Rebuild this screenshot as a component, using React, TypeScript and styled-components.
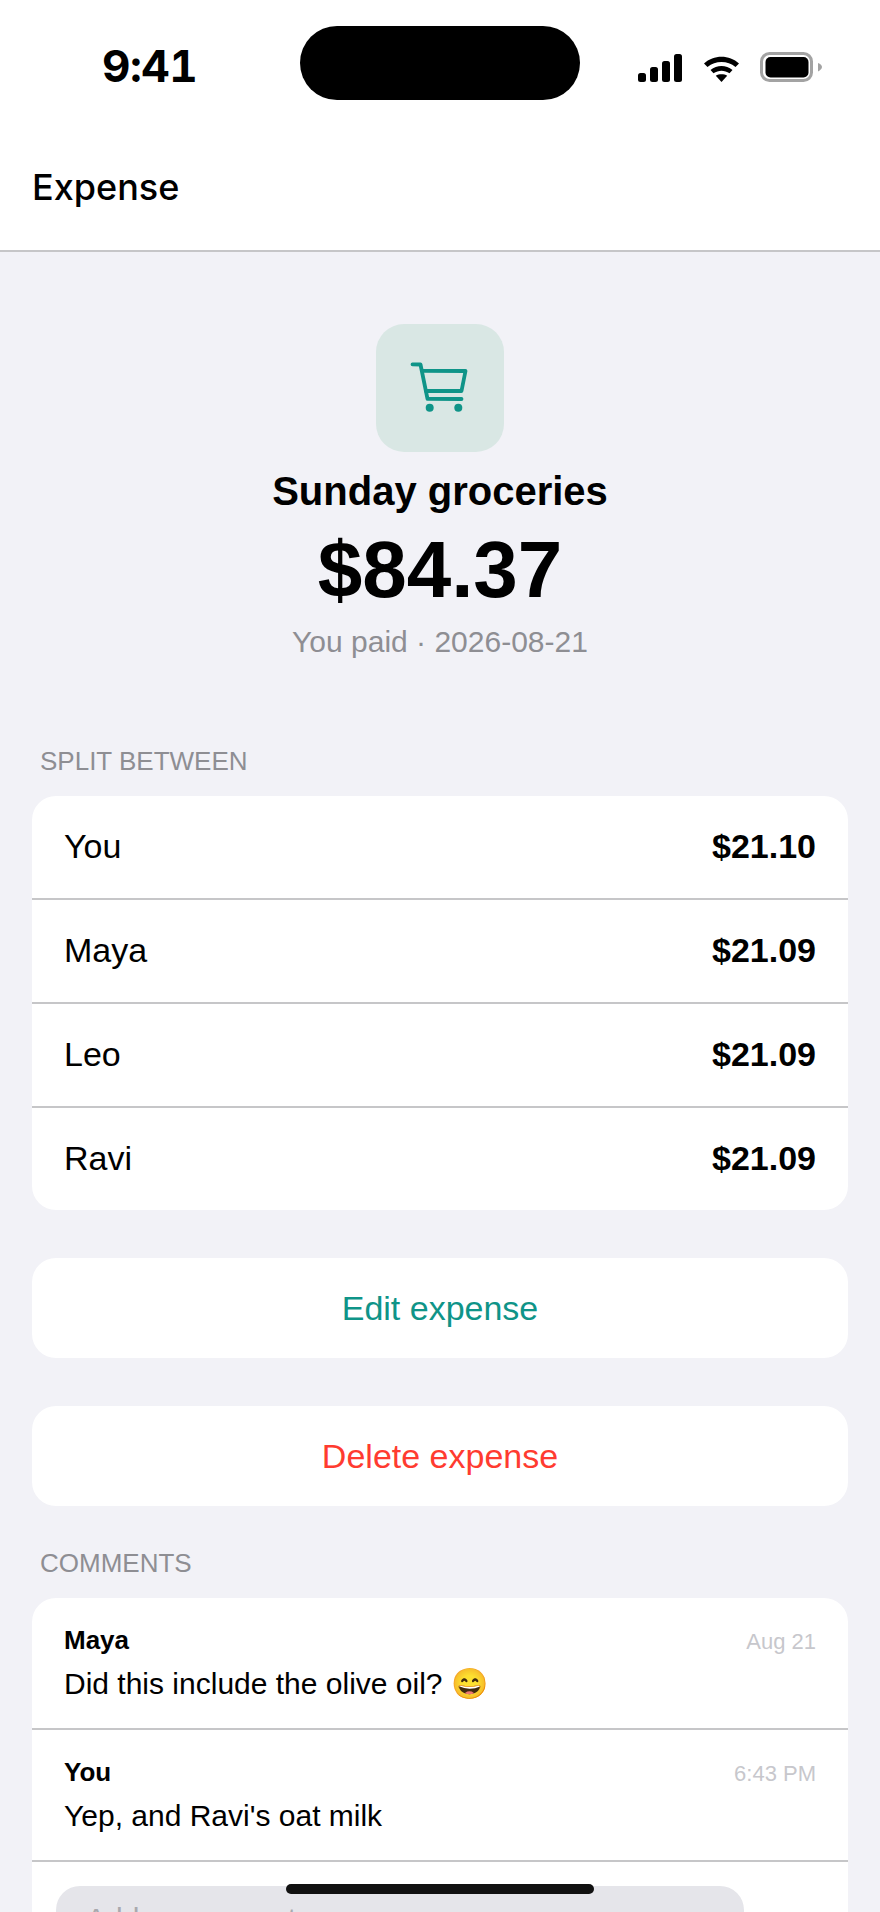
import React from "react";
import styled, { createGlobalStyle } from "styled-components";

const Global = createGlobalStyle`
  html, body { margin: 0; padding: 0; background: #f2f2f7; }
  * { box-sizing: border-box; }
`;
const Screen = styled.div`
  position: relative; width: 880px; height: 1912px; overflow: hidden;
  background: #f2f2f7; color: #000;
  font-family: "Liberation Sans", Arial, "Noto Color Emoji", sans-serif;
`;
const TopBar = styled.header`background: #fff; border-bottom: 2px solid #c6c6c8; height: 252px; display: flex; flex-direction: column;`;
const StatusBar = styled.div`height: 124px; position: relative; display: flex; align-items: flex-start; justify-content: space-between; padding: 39px 58px 0 102px;`;
const Time = styled.div`font-size: 44px; line-height: 54px; font-weight: 700; font-family: "Inter", sans-serif; font-variant-numeric: tabular-nums; letter-spacing: -0.5px; width: 100px;`;
const Island = styled.div`position: absolute; left: 300px; top: 26px; width: 280px; height: 74px; border-radius: 37px; background: #000;`;
const StatusIcons = styled.div`display: flex; align-items: flex-end; height: 30px; margin-top: 13px; svg { display: block; }`;
const WifiSlot = styled.span`margin: 0 21px 0 22px;`;
const NavBar = styled.div`height: 126px; display: flex; align-items: center; padding: 0 32px;`;
const NavTitle = styled.h1`margin: 0; font: 500 36px/44px "Inter", sans-serif;`;
const Hero = styled.section`display: flex; flex-direction: column; align-items: center; padding-top: 72px;`;
const IconTile = styled.div`width: 128px; height: 128px; border-radius: 28px; background: #d9e7e4; svg { display: block; }`;
const Title = styled.div`font-size: 40px; line-height: 48px; font-weight: 700; margin-top: 15px;`;
const Amount = styled.div`font-size: 80px; line-height: 92px; font-weight: 700; margin-top: 9px;`;
const Sub = styled.div`font-size: 30px; line-height: 38px; color: #8e8e93; margin-top: 7px;`;
const SectionLabel = styled.div<{ $top: number }>`font-size: 26px; line-height: 32px; color: #8e8e93; padding-left: 40px; margin: ${p => p.$top}px 0 19px;`;
const Card = styled.div`margin: 0 32px; background: #fff; border-radius: 24px; overflow: hidden;`;
const Row = styled.div`height: 104px; padding: 0 32px 2px; display: flex; align-items: center; justify-content: space-between; font-size: 34px; border-bottom: 2px solid #c6c6c8; &:last-child { height: 102px; border-bottom: 0; }`;
const Value = styled.span`font-weight: 700;`;
const ActionCard = styled.div<{ $color: string }>`margin: 48px 32px 0; height: 100px; background: #fff; border-radius: 24px; display: flex; align-items: center; justify-content: center; font-size: 34px; color: ${p => p.$color};`;
const Comment = styled.div`height: 132px; padding: 26px 32px 0; border-bottom: 2px solid #c6c6c8;`;
const CommentHead = styled.div`display: flex; justify-content: space-between; align-items: baseline; line-height: 32px;`;
const Author = styled.span`font-size: 26px; font-weight: 700;`;
const Stamp = styled.span`font-size: 22px; color: #c7c7cc;`;
const CommentText = styled.div`font-size: 30px; line-height: 40px; margin-top: 6px;`;
const Composer = styled.div`padding: 24px 24px 0; height: 120px;`;
const Field = styled.div`width: 688px; height: 80px; border-radius: 24px; background: #e5e5ea; color: #a9a9ae; font-size: 30px; padding: 16px 30px;`;
const HomeBar = styled.div`position: absolute; left: 286px; top: 1884px; width: 308px; height: 10px; border-radius: 5px; background: #111;`;

const Signal = () => (
  <svg width="44" height="28" viewBox="0 0 44 28" fill="#000">
    <rect x="0" y="19" width="8" height="9" rx="2.5" />
    <rect x="12" y="13" width="8" height="15" rx="2.5" />
    <rect x="24" y="7" width="8" height="21" rx="2.5" />
    <rect x="36" y="0" width="8" height="28" rx="2.5" />
  </svg>
);
const Wifi = () => (
  <svg width="35" height="26" viewBox="0 0 35 26" fill="#000">
    <path d="M0 7.5 C9.5 -1.6 25.5 -1.6 35 7.5 L31.5 11 C23.5 4.2 11.5 4.2 3.5 11Z" />
    <path d="M6.5 14 C13 8.8 22 8.8 28.500 14 L25.500 17.200 C20.500 13.800 14.500 13.800 9.500 17.200Z" />
    <path d="M11.800 19.700 C15 17.800 20 17.800 23.200 19.700 L17.500 26Z" />
  </svg>
);
const Battery = () => (
  <svg width="62" height="30" viewBox="0 0 62 30">
    <rect x="1.500" y="1.500" width="50" height="27" rx="8" fill="none" stroke="#a3a3a3" strokeWidth="3" />
    <rect x="5.500" y="5" width="43" height="20.500" rx="5" fill="#000" />
    <path d="M58 11 C60.500 12 62 13.500 62 15 C62 16.500 60.500 18 58 19.500Z" fill="#a3a3a3" />
  </svg>
);
const Cart = () => (
  <svg width="128" height="128" viewBox="376 324 128 128" fill="none" stroke="#0f9488" strokeWidth="3.8" strokeLinecap="round" strokeLinejoin="round">
    <path d="M412.500 364.300 L420.500 364.500 L427.500 398.800 L461.500 399" />
    <path d="M422.500 370.800 L465.500 371 L461.500 391 L426 391" />
    <circle cx="429.700" cy="407.700" r="4" fill="#0f9488" stroke="none" />
    <circle cx="458.300" cy="407.700" r="4" fill="#0f9488" stroke="none" />
  </svg>
);

const split = [["You", "$21.10"], ["Maya", "$21.09"], ["Leo", "$21.09"], ["Ravi", "$21.09"]];

export default function App() {
  return (
    <Screen>
      <Global />
      <TopBar>
        <StatusBar>
          <Time>9:41</Time>
          <Island />
          <StatusIcons><Signal /><WifiSlot><Wifi /></WifiSlot><Battery /></StatusIcons>
        </StatusBar>
        <NavBar><NavTitle>Expense</NavTitle></NavBar>
      </TopBar>
      <Hero>
        <IconTile><Cart /></IconTile>
        <Title>Sunday groceries</Title>
        <Amount>$84.37</Amount>
        <Sub>You paid · 2026-08-21</Sub>
      </Hero>
      <SectionLabel $top={84}>SPLIT BETWEEN</SectionLabel>
      <Card>
        {split.map(([n, v]) => <Row key={n}><span>{n}</span><Value>{v}</Value></Row>)}
      </Card>
      <ActionCard $color="#0f9488">Edit expense</ActionCard>
      <ActionCard $color="#ff3b30">Delete expense</ActionCard>
      <SectionLabel $top={41}>COMMENTS</SectionLabel>
      <Card>
        <Comment>
          <CommentHead><Author>Maya</Author><Stamp>Aug 21</Stamp></CommentHead>
          <CommentText>Did this include the olive oil? 😄</CommentText>
        </Comment>
        <Comment>
          <CommentHead><Author>You</Author><Stamp>6:43 PM</Stamp></CommentHead>
          <CommentText>Yep, and Ravi's oat milk</CommentText>
        </Comment>
        <Composer><Field>Add a comment…</Field></Composer>
      </Card>
      <HomeBar />
    </Screen>
  );
}
